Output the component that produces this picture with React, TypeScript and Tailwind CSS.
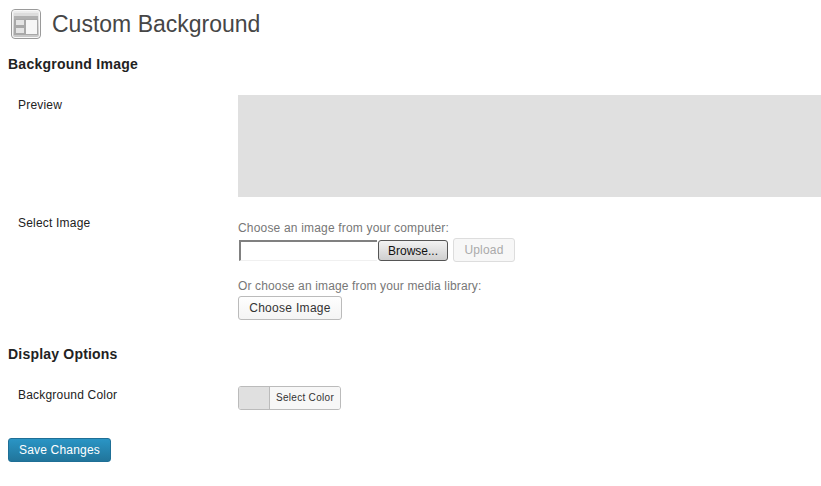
const font = { fontFamily: '"Liberation Sans", Arial, sans-serif' };

const PageIcon = () => (
  <svg width="32" height="32" viewBox="0 0 32 32" className="shrink-0">
    <defs>
      <linearGradient id="frame" x1="0" y1="0" x2="0" y2="1">
        <stop offset="0" stopColor="#efefef" />
        <stop offset="1" stopColor="#c4c4c4" />
      </linearGradient>
    </defs>
    <rect x="1.5" y="1.5" width="29" height="29" rx="3.5" fill="url(#frame)" stroke="#9a9a9a" />
    <rect x="2.5" y="2.5" width="27" height="27" rx="2.5" fill="none" stroke="#f8f8f8" />
    <rect x="4" y="5" width="24" height="3" fill="#dcdcdc" />
    <rect x="4" y="8" width="24" height="3" fill="#b0b0b0" />
    <rect x="4" y="11" width="24" height="16" fill="#a8a8a8" />
    <rect x="6" y="12" width="8" height="5" fill="#e4e4e4" />
    <rect x="6" y="20" width="8" height="5" fill="#e4e4e4" />
    <rect x="16" y="12" width="11" height="14" fill="#f6f6f6" />
  </svg>
);

const Row = ({ label, children }: { label: string; children: React.ReactNode }) => (
  <div className="flex">
    <div className="w-[230px] shrink-0 pl-[10px] pt-[2px] text-xs leading-[16px] tracking-[0.2px] text-[#222]">{label}</div>
    <div className="min-w-0 flex-1">{children}</div>
  </div>
);

const secondaryBtn =
  "rounded-[3px] border border-[#bbb] bg-gradient-to-b from-[#fefefe] to-[#f4f4f4] text-xs tracking-[0.3px] text-[#333]";

export default function App() {
  return (
    <div style={font} className="h-[486px] w-[821px] overflow-hidden bg-white">
      <div className="flex h-[48px] items-center pl-[10px]">
        <PageIcon />
        <h2 className="ml-[10px] text-[23px] leading-[29px] font-normal text-[#464646]">Custom Background</h2>
      </div>
      <div className="pl-[8px]">
        <h3 className="mt-[8px] text-[14px] leading-[16px] font-bold tracking-[0.25px] text-[#222]">Background Image</h3>
        <div className="mt-[23px]">
          <Row label="Preview">
            <div className="h-[102px] bg-[#e0e0e0]" />
          </Row>
        </div>
        <div className="mt-[16px]">
          <Row label="Select Image">
            <p className="mt-[7px] text-xs leading-[16px] tracking-[0.18px] text-[#777]">Choose an image from your computer:</p>
            <div className="mt-[2px] flex items-center">
              <div className="ml-[1px] h-[21px] w-[138px] border-t-2 border-l-2 border-[#808080] border-b border-b-[#f0f0f0] border-r-0 bg-white" />
              <button className="ml-[1px] h-[21px] w-[70px] rounded-[3px] border border-[#555] bg-gradient-to-b from-[#f2f2f2] to-[#cfcfcf] pt-[2px] text-xs text-[#111]">
                Browse...
              </button>
              <button className="ml-[5px] h-[24px] w-[62px] rounded-[3px] border border-[#ddd] bg-[#f7f7f7] text-xs tracking-[0.2px] text-[#aaa]">
                Upload
              </button>
            </div>
            <p className="mt-[16px] text-xs leading-[16px] tracking-[0.14px] text-[#777]">Or choose an image from your media library:</p>
            <button className={`${secondaryBtn} mt-[2px] block h-[24px] w-[104px]`}>Choose Image</button>
          </Row>
        </div>
        <h3 className="mt-[26px] text-[14px] leading-[16px] font-bold tracking-[0.2px] text-[#222]">Display Options</h3>
        <div className="mt-[23px]">
          <Row label="Background Color">
            <div className="mt-[1px] flex h-[24px] w-[103px] overflow-hidden rounded-[3px] border border-[#bbb]">
              <div className="w-[31px] border-r border-[#bbb] bg-[#e0e0e0]" />
              <div className="flex flex-1 items-center justify-center bg-[#f7f7f7] pb-[2px] text-[10px] tracking-[0.3px] text-[#333]">Select Color</div>
            </div>
          </Row>
        </div>
        <button className="mt-[28px] block h-[24px] w-[103px] rounded-[3px] border border-[#1f6f96] bg-gradient-to-b from-[#2a95c5] to-[#21759b] text-xs tracking-[0.2px] text-white">
          Save Changes
        </button>
      </div>
    </div>
  );
}
